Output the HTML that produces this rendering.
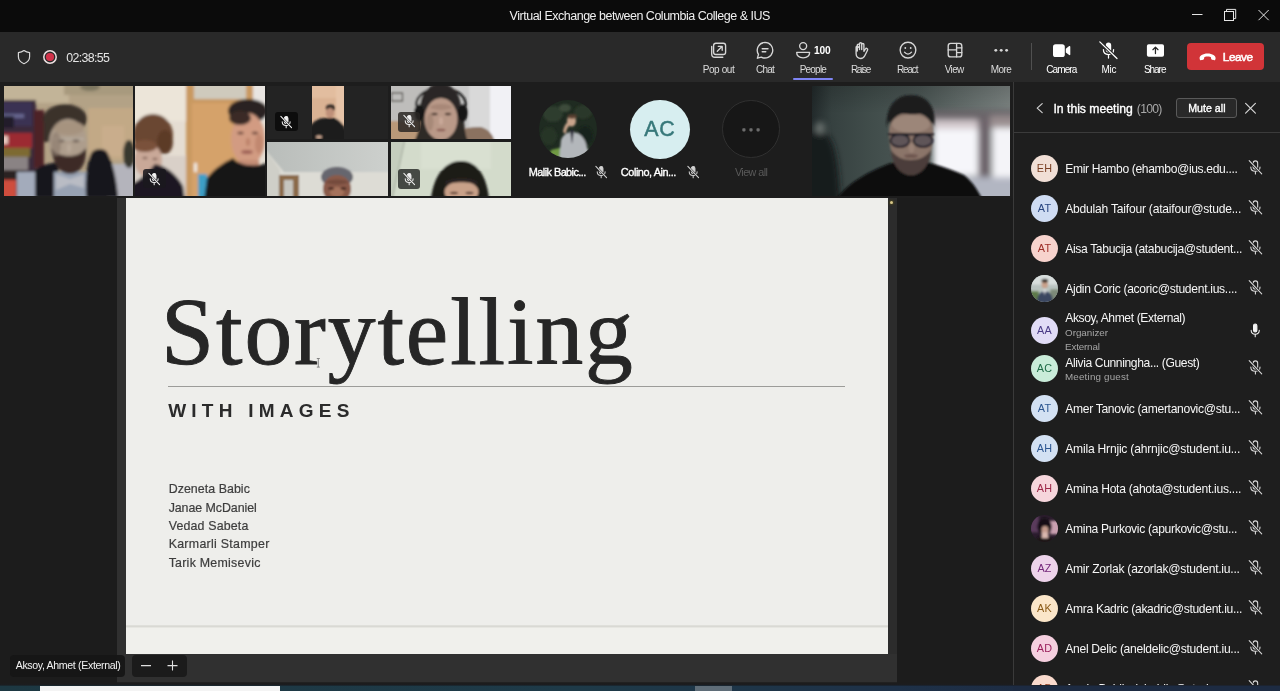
<!DOCTYPE html>
<html lang="en"><head><meta charset="utf-8"><title>Virtual Exchange between Columbia College &amp; IUS</title>
<style>
html,body{margin:0;padding:0;}
body{width:1280px;height:691px;overflow:hidden;background:#1c1c1c;font-family:'Liberation Sans',sans-serif;position:relative;}
.abs,.t,svg.i{position:absolute;}
.t{white-space:pre;line-height:1;margin:0;padding:0;}
#app{position:absolute;left:0;top:0;width:1280px;height:691px;overflow:hidden;will-change:transform;}
#titlebar{left:0;top:0;width:1280px;height:32px;background:#0b0b0b;}
#toolbar{left:0;top:32px;width:1280px;height:50px;background:#292929;}
#gallery{left:0;top:82px;width:1013px;height:116px;background:#1d1d1d;}
#stage{left:0;top:198px;width:1013px;height:487px;background:#1c1c1c;}
#content{left:117px;top:198px;width:780px;height:485px;background:#303030;}
#slide{left:126px;top:198px;width:762px;height:456px;background:#eeeeeb;overflow:hidden;}
#panel{left:1013px;top:82px;width:267px;height:603px;background:#1e1e1e;border-left:1px solid #3a3a3a;box-sizing:border-box;overflow:hidden;}
#strip{left:0;top:685px;width:1280px;height:6px;background:linear-gradient(90deg,#1d3842 0%,#1e3a48 45%,#1e3148 70%,#1d2b42 82%,#1d2b42 100%);}
.av{position:absolute;width:27px;height:27px;border-radius:50%;overflow:hidden;}
.tile{position:absolute;overflow:hidden;}
.mutebox{position:absolute;border-radius:3px;}
.ini{width:27px;height:27px;line-height:27.500px;text-align:center;font-size:10.800px;letter-spacing:.2px;}
.sb0{-webkit-text-stroke:.2px currentColor;}
.sb{-webkit-text-stroke:.35px currentColor;}
.sb2{-webkit-text-stroke:.5px currentColor;}
.ttl{-webkit-text-stroke:.9px #262626;}
</style></head><body>
<div id="app">

<header id="titlebar" class="abs">
<h1 class="t " style="left:509.62px;top:9.72px;font-size:12.5px;letter-spacing:-0.489px;color:#f0f0f0;font-weight:400;">Virtual Exchange between Columbia College &amp; IUS</h1>
<svg class="i" style="left:1186px;top:4px" width="90" height="24" viewBox="0 0 90 24" fill="none" stroke="#e6e6e6" stroke-width="1">
<path d="M6 10.5h10.5"/>
<rect x="38.500" y="7.500" width="9" height="9"/><path d="M40.500 7.500V5.400h9.200v9.200h-2.200"/>
<path d="M72.5 6l10.2 10.2M82.700 6L72.500 16.200"/>
</svg>
</header>
<nav><div id="toolbar" class="abs"></div>
<svg class="i" style="left:16px;top:48px" width="16" height="18" viewBox="0 0 16 18" fill="none" stroke="#d8d8d8" stroke-width="1.2" stroke-linejoin="round"><path d="M8 2.6c1.700 1.300 3.600 1.900 5.600 2v4.200c0 3.200-2.300 5.600-5.600 6.900c-3.300-1.300-5.600-3.700-5.600-6.900V4.600c2-.1 3.900-.7 5.600-2z"/></svg>
<svg class="i" style="left:42px;top:48.500px" width="16" height="16" viewBox="0 0 16 16"><circle cx="8" cy="8" r="6.200" fill="none" stroke="#ecdfe0" stroke-width="1.500"/><circle cx="8" cy="8" r="4.100" fill="#d3324a"/></svg>
<span class="t " style="left:66.13px;top:51.70px;font-size:12.4px;letter-spacing:-0.641px;color:#e4e4e4;font-weight:400;">02:38:55</span>
<span class="t " style="left:702.70px;top:64.63px;font-size:10.0px;letter-spacing:-0.397px;color:#dcdcdc;font-weight:400;">Pop out</span>
<span class="t " style="left:756.00px;top:64.63px;font-size:10.0px;letter-spacing:-0.742px;color:#dcdcdc;font-weight:400;">Chat</span>
<span class="t " style="left:799.70px;top:64.63px;font-size:10.0px;letter-spacing:-0.788px;color:#dcdcdc;font-weight:400;">People</span>
<span class="t " style="left:850.90px;top:64.63px;font-size:10.0px;letter-spacing:-1.295px;color:#dcdcdc;font-weight:400;">Raise</span>
<span class="t " style="left:896.90px;top:64.63px;font-size:10.0px;letter-spacing:-1.131px;color:#dcdcdc;font-weight:400;">React</span>
<span class="t " style="left:944.70px;top:64.63px;font-size:10.0px;letter-spacing:-0.633px;color:#dcdcdc;font-weight:400;">View</span>
<span class="t " style="left:990.70px;top:64.63px;font-size:10.0px;letter-spacing:-0.566px;color:#dcdcdc;font-weight:400;">More</span>
<span class="t " style="left:1046.30px;top:64.63px;font-size:10.0px;letter-spacing:-0.916px;color:#ffffff;font-weight:400;">Camera</span>
<span class="t " style="left:1101.50px;top:64.63px;font-size:10.0px;letter-spacing:-0.281px;color:#ffffff;font-weight:400;">Mic</span>
<span class="t " style="left:1143.90px;top:64.63px;font-size:10.0px;letter-spacing:-1.022px;color:#ffffff;font-weight:400;">Share</span>
<span class="t " style="left:813.99px;top:45.77px;font-size:10.2px;letter-spacing:-0.144px;color:#ffffff;font-weight:700;">100</span>
<div class="abs" style="left:793px;top:78px;width:40px;height:2px;background:#7f85f5;border-radius:1px"></div>
<div class="abs" style="left:1031px;top:43px;width:1px;height:27px;background:#505050"></div>
<svg class="i" style="left:709px;top:40px" width="20" height="20" viewBox="0 0 20 20" fill="none" stroke="#d6d6d6" stroke-width="1.35" stroke-linecap="round" stroke-linejoin="round">
<rect x="4.600" y="3.200" width="12" height="11.300" rx="2.300"/><path d="M2.700 6.500v7.400a3.300 3.300 0 0 0 3.300 3.300h7.800"/><path d="M8.300 11.300l4.700-4.700M9.300 6.400h3.900v3.900"/></svg>
<svg class="i" style="left:755px;top:40px" width="20" height="20" viewBox="0 0 20 20" fill="none" stroke="#d6d6d6" stroke-width="1.35" stroke-linecap="round" stroke-linejoin="round">
<path d="M10 2.400a7.800 7.800 0 1 1-3.700 14.700l-3.900 1.100l1.100-3.800A7.800 7.800 0 0 1 10 2.400z"/><path d="M7.200 8.700h5.800M7.200 11.700h3.600"/></svg>
<svg class="i" style="left:793px;top:40px" width="20" height="20" viewBox="0 0 20 20" fill="none" stroke="#d6d6d6" stroke-width="1.35" stroke-linecap="round" stroke-linejoin="round">
<circle cx="10.150" cy="6.100" r="3.500"/><path d="M3.700 12.300h12.900c.2 3.300-2.200 5.600-6.450 5.600s-6.650-2.300-6.450-5.600z"/></svg>
<svg class="i" style="left:851px;top:40px" width="20" height="20" viewBox="0 0 20 20" fill="none" stroke="#d6d6d6" stroke-width="1.35" stroke-linecap="round" stroke-linejoin="round">
<path d="M6.300 11V5.200a1.100 1.100 0 0 1 2.200 0V9.500V3.800a1.100 1.100 0 0 1 2.200 0V9.500V4.600a1.100 1.100 0 0 1 2.200 0V11.300l1.500-2.300a1.200 1.200 0 0 1 2.100 1.200l-2.600 5.300c-.9 1.800-2.100 3-4.200 3c-2.500 0-4.600-1.600-4.600-4.800V7.300a1.100 1.100 0 0 1 2.200 0"/></svg>
<svg class="i" style="left:897.700px;top:40.300px" width="20" height="20" viewBox="0 0 20 20" fill="none" stroke="#d6d6d6" stroke-width="1.35" stroke-linecap="round" stroke-linejoin="round">
<circle cx="10" cy="10.100" r="7.850"/><path d="M6.500 12.200c1 1.300 2.200 1.900 3.500 1.900s2.500-.6 3.500-1.900"/><circle cx="7.300" cy="8" r=".9" fill="#d6d6d6" stroke="none"/><circle cx="12.700" cy="8" r=".9" fill="#d6d6d6" stroke="none"/></svg>
<svg class="i" style="left:944.500px;top:40.200px" width="20" height="20" viewBox="0 0 20 20" fill="none" stroke="#d6d6d6" stroke-width="1.35" stroke-linecap="round" stroke-linejoin="round">
<rect x="3.200" y="3.400" width="13.600" height="13.500" rx="2.500"/><path d="M11.600 3.400v13.500M3.200 9.900h8.400M11.600 7.800h5.200M11.600 12.600h5.200"/></svg>
<svg class="i" style="left:991px;top:40px" width="20" height="20" viewBox="0 0 20 20" fill="#d6d6d6"><circle cx="4.800" cy="10.350" r="1.450"/><circle cx="10.200" cy="10.350" r="1.450"/><circle cx="15.600" cy="10.350" r="1.450"/></svg>
<svg class="i" style="left:1051px;top:40px" width="22" height="20" viewBox="0 0 22 20" fill="#ffffff"><rect x="2" y="4.200" width="11.800" height="12.800" rx="2.600"/><path d="M14.800 8.700l3.400-2.600c.5-.4 1.100 0 1.100.6v7.800c0 .6-.6 1-1.100.6l-3.400-2.600z"/></svg>
<svg class="i" style="left:1098px;top:40px" width="22" height="20" viewBox="0 0 22 20" fill="none" stroke="#ffffff" stroke-width="1.250" stroke-linecap="round"><rect x="7.800" y="2.600" width="5.400" height="9.800" rx="2.700" fill="#fff" stroke="none"/><path d="M5.400 9.600c0 3.100 2.200 5 5.100 5s5.100-1.900 5.100-5M10.500 14.800v3.300"/><path d="M1.800 1.900l17.200 16.600" stroke="#292929" stroke-width="3.200"/><path d="M1.800 1.900l17.200 16.600"/></svg>
<svg class="i" style="left:1145px;top:40px" width="22" height="20" viewBox="0 0 22 20"><rect x="1.900" y="4.200" width="17.100" height="12.500" rx="1.800" fill="#fff"/><path d="M10.450 13.600V7.400M7.900 9.700l2.550-2.600l2.550 2.600" fill="none" stroke="#292929" stroke-width="1.250" stroke-linecap="round" stroke-linejoin="round"/></svg>
<button class="abs" style="left:1187px;top:43px;width:77px;height:27px;background:#d13438;border:0;border-radius:4px;padding:0;margin:0"></button>
<svg class="i" style="left:1198px;top:50px" width="20" height="14" viewBox="0 0 20 14" fill="#fff"><path d="M1.600 8.300C1.300 6.200 4.800 3.600 9.600 3.600s8.300 2.600 8 4.700c-.1.900-.3 1.700-.9 1.900c-.7.200-2.400-.3-3-.6c-.7-.4-.6-1.400-.8-2.300c-.1-.5-1.500-.9-3.300-.9s-3.200.4-3.300.9c-.2.900-.1 1.900-.8 2.300c-.6.300-2.300.8-3 .6c-.6-.2-.8-1-.9-1.900z"/></svg>
<span class="t sb2" style="left:1222.85px;top:51.71px;font-size:11.8px;letter-spacing:-0.512px;color:#ffffff;font-weight:400;">Leave</span>
</nav>
<section><div id="gallery" class="abs"></div>
<div class="tile" style="left:4px;top:86px;width:129px;height:110px"><svg width="129" height="110" viewBox="0 0 129 110"><defs><filter id="b1" x="-10%" y="-10%" width="120%" height="120%"><feGaussianBlur stdDeviation="1.700"/></filter><filter id="b1s" x="-10%" y="-10%" width="120%" height="120%"><feGaussianBlur stdDeviation="0.800"/></filter></defs>
<rect width="129" height="110" fill="#b3a286"/>
<g filter="url(#b1)">
<rect x="-5" y="-5" width="70" height="22" fill="#c2b498"/>
<rect x="60" y="-5" width="75" height="14" fill="#a89a7e"/>
<ellipse cx="86" cy="1" rx="10" ry="4" fill="#7e7760"/>
<rect x="84" y="22" width="50" height="52" fill="#c2a986"/>
<rect x="98" y="40" width="22" height="30" fill="#c9ad8c"/>
<rect x="-4" y="14" width="36" height="100" fill="#3b2c3a"/>
<rect x="-4" y="16" width="32" height="24" fill="#3b3152"/>
<rect x="-2" y="28" width="22" height="4" fill="#66668f"/>
<rect x="-4" y="30" width="14" height="12" fill="#241c2c"/>
<rect x="-4" y="47" width="32" height="15" fill="#9c2a31"/>
<rect x="-2" y="50" width="6" height="8" fill="#e8c8c0"/>
<rect x="-4" y="62" width="30" height="9" fill="#7d6a30"/>
<rect x="-4" y="71" width="28" height="13" fill="#8a8384"/>
<rect x="-4" y="84" width="24" height="10" fill="#2a2024"/>
<rect x="-4" y="94" width="16" height="20" fill="#cf4e3c"/>
<rect x="30" y="24" width="10" height="58" fill="#4e2028"/>
<rect x="13" y="86" width="20" height="28" fill="#a3abbb"/>
<rect x="104" y="78" width="30" height="36" fill="#b4b4bc"/>
<ellipse cx="125" cy="68" rx="6" ry="14" fill="#38382e"/>
<path d="M31 112V84c6-5 14-7 24-8l-3 36z" fill="#17161d"/>
<path d="M50 86h34v28H50z" fill="#98a2b3"/>
<path d="M52 88l14 5l14-5v14l-14-4l-14 6z" fill="#b9bcc4"/>
<path d="M82 112c-1-20 1-38 6-46c4-4 12-4 15 0c6 10 10 30 11 46z" fill="#15131a"/>
<ellipse cx="61" cy="33" rx="22" ry="15" fill="#3a3029"/>
<rect x="40" y="34" width="8" height="22" fill="#3a3029"/>
<ellipse cx="64" cy="57" rx="19" ry="24" fill="#ad9d8c"/>
<ellipse cx="65" cy="42" rx="15" ry="7" fill="#a6937f"/>
<path d="M47 62c2 14 8 26 19 26s17-12 16-26c-5 6-9 8-17 8s-13-2-18-8z" fill="#3c2c26"/>
<rect x="48" y="52" width="32" height="2" fill="#cfd3d0" opacity=".3"/>
<ellipse cx="57" cy="55" rx="3.500" ry="1.400" fill="#6f6055"/><ellipse cx="72" cy="55" rx="3.500" ry="1.400" fill="#6f6055"/><ellipse cx="65" cy="62" rx="2.200" ry="4.500" fill="#b9a998"/>
<ellipse cx="52" cy="58" rx="5" ry="12" fill="#8d7c6d" opacity=".7"/>
</g></svg></div>
<div class="tile" style="left:135px;top:86px;width:130px;height:110px"><svg width="130" height="110" viewBox="0 0 130 110"><defs><filter id="b2" x="-10%" y="-10%" width="120%" height="120%"><feGaussianBlur stdDeviation="1.500"/></filter></defs>
<rect width="130" height="110" fill="#e5ddd2"/>
<g filter="url(#b2)">
<rect x="-5" y="-5" width="58" height="40" fill="#ece5d9"/>
<rect x="-5" y="70" width="58" height="45" fill="#d9d0c8"/>
<rect x="51" y="-5" width="67" height="120" fill="#c99961"/>
<rect x="57" y="17" width="55" height="98" fill="#d5a26a"/>
<rect x="59" y="-5" width="52" height="18" fill="#cfcabd"/>
<rect x="118" y="-5" width="16" height="40" fill="#e9e5e1"/>
<rect x="59" y="77" width="3" height="9" fill="#f1ece4"/>
<rect x="63" y="88" width="9" height="26" fill="#3d9fc6"/>
<ellipse cx="18" cy="49" rx="20" ry="21" fill="#6b4631"/>
<ellipse cx="30" cy="56" rx="8" ry="12" fill="#5c3a28"/>
<ellipse cx="13" cy="74" rx="14" ry="17" fill="#c9a898"/>
<ellipse cx="10" cy="60" rx="12" ry="6" fill="#7a513a"/>
<path d="M-4 98c6-2 14-8 24-20c10 2 20 8 28 22l2 14H-4z" fill="#1a1722"/>
<ellipse cx="113" cy="25" rx="20" ry="12" fill="#2b2320"/>
<ellipse cx="113" cy="53" rx="17" ry="26" fill="#d29b82"/>
<ellipse cx="105" cy="32" rx="11" ry="7" fill="#3a2b25"/>
<rect x="104" y="74" width="20" height="12" fill="#c58e76"/>
<path d="M69 114l3-22c8-10 16-15 26-20c6 8 24 10 36 4v38z" fill="#131317"/>
<ellipse cx="112" cy="66" rx="6" ry="2" fill="#9c5e55"/>
<ellipse cx="105.500" cy="47" rx="3.200" ry="1.300" fill="#5d3b31"/><ellipse cx="120" cy="47" rx="3.200" ry="1.300" fill="#5d3b31"/><ellipse cx="113" cy="56" rx="2.200" ry="4" fill="#bd836b"/><ellipse cx="124" cy="58" rx="4" ry="10" fill="#b98068" opacity=".7"/>
<ellipse cx="10" cy="72" rx="2.600" ry="1.100" fill="#6a4a40"/><ellipse cx="20" cy="73" rx="2.600" ry="1.100" fill="#6a4a40"/>
</g></svg>
<div class="mutebox" style="left:8.200px;top:82.500px;width:22.500px;height:19.500px;background:rgba(26,24,30,.86)"></div><svg class="i" style="left:11.95px;top:85.85px" width="14.500" height="14.500" viewBox="0 0 18 18" fill="none" stroke="#f2f2f2" stroke-width="1.300" stroke-linecap="round"><rect x="6.700" y="2" width="4.400" height="8.600" rx="2.200" fill="#f2f2f2"/><path d="M4 8.400c0 2.900 2.100 4.600 4.900 4.600s4.900-1.700 4.900-4.600M8.900 13.200v2.700"/><path d="M2.300 1.700l13.300 14" stroke="#1e1c22" stroke-width="2.600"/><path d="M2.300 1.700l13.300 14"/></svg></div>
<div class="tile" style="left:267px;top:86px;width:121px;height:53px;background:#232323"><svg class="i" style="left:45px;top:0" width="32" height="53" viewBox="0 0 32 53"><defs><filter id="b3" x="-10%" y="-10%" width="120%" height="120%"><feGaussianBlur stdDeviation="0.900"/></filter></defs>
<rect width="32" height="53" fill="#dab293"/>
<g filter="url(#b3)">
<rect x="-2" y="-2" width="36" height="14" fill="#e2bd9f"/>
<rect x="24" y="-2" width="10" height="40" fill="#e6c4a8"/>
<ellipse cx="18.500" cy="22" rx="4.600" ry="3.500" fill="#2e2622"/>
<ellipse cx="18" cy="27" rx="4.200" ry="5" fill="#bf9079"/>
<path d="M-2 55V40c4-5 9-8 14-8h10c5 1 9 6 12 12v11z" fill="#1b1b1f"/>
<ellipse cx="7" cy="51" rx="3" ry="1.800" fill="#c9a58f"/>
</g></svg>
<div class="mutebox" style="left:8.400px;top:26.100px;width:22.200px;height:19.100px;background:#0d0d0d"></div><svg class="i" style="left:11.75px;top:28.85px" width="14.500" height="14.500" viewBox="0 0 18 18" fill="none" stroke="#f4f4f4" stroke-width="1.300" stroke-linecap="round"><rect x="6.700" y="2" width="4.400" height="8.600" rx="2.200" fill="#f4f4f4"/><path d="M4 8.400c0 2.900 2.100 4.600 4.900 4.600s4.900-1.700 4.900-4.600M8.900 13.200v2.700"/><path d="M2.300 1.700l13.300 14" stroke="#0d0d0d" stroke-width="2.600"/><path d="M2.300 1.700l13.300 14"/></svg></div>
<div class="tile" style="left:267px;top:142px;width:121px;height:54px"><svg width="121" height="54" viewBox="0 0 121 54"><defs><filter id="b4" x="-10%" y="-10%" width="120%" height="120%"><feGaussianBlur stdDeviation="1.300"/></filter><linearGradient id="g4" x1="0" y1="0" x2="1" y2="0"><stop offset="0" stop-color="#b9bdba"/><stop offset="1" stop-color="#cdd0cd"/></linearGradient></defs>
<rect width="121" height="54" fill="url(#g4)"/>
<g filter="url(#b4)">
<path d="M-3 6l20 24h108v28H-3z" fill="#dddcd5"/>
<path d="M-3 6l16 22v30H-3z" fill="#cfcfc8"/>
<rect x="12" y="33" width="20" height="24" fill="#8b6a48"/>
<rect x="17" y="38" width="9" height="20" fill="#c7c6bf"/>
<ellipse cx="70" cy="35" rx="16" ry="10" fill="#66666e"/>
<ellipse cx="70" cy="47" rx="14" ry="14" fill="#8a5a49"/>
<ellipse cx="70" cy="50" rx="7" ry="5" fill="#a5725c"/>
<ellipse cx="70" cy="40" rx="11" ry="2.500" fill="#754b3d"/>
<ellipse cx="64" cy="46.500" rx="3" ry="1.200" fill="#3f241c"/><ellipse cx="76.500" cy="46.500" rx="3" ry="1.200" fill="#3f241c"/>
</g></svg></div>
<div class="tile" style="left:391px;top:86px;width:120px;height:53px"><svg width="120" height="53" viewBox="0 0 120 53"><defs><filter id="b5" x="-10%" y="-10%" width="120%" height="120%"><feGaussianBlur stdDeviation="1.200"/></filter></defs>
<rect width="120" height="53" fill="#c9c9c8"/>
<g filter="url(#b5)">
<rect x="-3" y="-3" width="40" height="40" fill="#bebdbb"/>
<rect x="78" y="-3" width="22" height="60" fill="#d9d9d9"/>
<rect x="99" y="-3" width="25" height="60" fill="#f1f1f5"/>
<rect x="0.500" y="7" width="11" height="8" fill="none" stroke="#4a4642" stroke-width="1.200"/>
<rect x="-3" y="35" width="38" height="22" fill="#b99878"/>
<path d="M60 56c2-10 14-16 30-15c8 2 12 8 14 15z" fill="#8b7261"/>
<path d="M25 20C25-4 75-4 75 20" fill="none" stroke="#151515" stroke-width="2.200"/>
<ellipse cx="49.500" cy="22" rx="20.500" ry="25" fill="#2b2725"/>
<path d="M29 30c0 10-2 18-6 26h54c-3-8-4-16-4-26z" fill="#2f2a27"/>
<ellipse cx="28" cy="27" rx="5" ry="8.500" fill="#141414"/>
<ellipse cx="72" cy="27" rx="5" ry="8.500" fill="#141414"/>
<ellipse cx="50" cy="33" rx="16.500" ry="21" fill="#b99988"/>
<ellipse cx="50" cy="21" rx="11" ry="3" fill="#a88878"/>
<ellipse cx="43.500" cy="28" rx="3.200" ry="1.300" fill="#4e3a33"/><ellipse cx="57" cy="28" rx="3.200" ry="1.300" fill="#4e3a33"/><ellipse cx="50" cy="35" rx="2" ry="4" fill="#c9a999"/><ellipse cx="50" cy="44" rx="4.500" ry="1.300" fill="#8c5d55"/><ellipse cx="39" cy="36" rx="3.500" ry="9" fill="#a08272" opacity=".7"/>
</g></svg>
<div class="mutebox" style="left:6.650px;top:26.100px;width:22.200px;height:19.600px;background:rgba(40,37,35,.84)"></div><svg class="i" style="left:10.5px;top:27.55px" width="14.500" height="14.500" viewBox="0 0 18 18" fill="none" stroke="#f0f0f0" stroke-width="1.300" stroke-linecap="round"><rect x="6.700" y="2" width="4.400" height="8.600" rx="2.200" fill="#f0f0f0"/><path d="M4 8.400c0 2.900 2.100 4.600 4.900 4.600s4.900-1.700 4.900-4.600M8.900 13.200v2.700"/><path d="M2.300 1.700l13.300 14" stroke="#3d3a37" stroke-width="2.600"/><path d="M2.300 1.700l13.300 14"/></svg></div>
<div class="tile" style="left:391px;top:142px;width:120px;height:54px"><svg width="120" height="54" viewBox="0 0 120 54"><defs><filter id="b6" x="-10%" y="-10%" width="120%" height="120%"><feGaussianBlur stdDeviation="1.200"/></filter></defs>
<rect width="120" height="54" fill="#d3dbcb"/>
<g filter="url(#b6)">
<rect x="30" y="-3" width="70" height="30" fill="#d9e0d1"/>
<path d="M-3 -3h17L2 57h-5z" fill="#c5cdbd"/>
<path d="M14 -3L1 57" stroke="#aab2a4" stroke-width="1.200" fill="none"/>
<path d="M40 57c2-20 12-38 30-38s26 18 28 38z" fill="#1b1b19"/>
<ellipse cx="70.500" cy="50" rx="17" ry="11" fill="#c9a189"/>
<path d="M53 44c8-5 27-5 35 0l-2-5c-8-4-23-4-31 0z" fill="#2a2420"/>
<ellipse cx="63" cy="51" rx="4" ry="1.200" fill="#5a3c30"/><ellipse cx="78.500" cy="51" rx="4" ry="1.200" fill="#5a3c30"/>
</g></svg>
<div class="mutebox" style="left:6.650px;top:27px;width:22.850px;height:19.500px;background:rgba(34,36,34,.8)"></div><svg class="i" style="left:11.15px;top:29.75px" width="14.500" height="14.500" viewBox="0 0 18 18" fill="none" stroke="#f0f0f0" stroke-width="1.300" stroke-linecap="round"><rect x="6.700" y="2" width="4.400" height="8.600" rx="2.200" fill="#f0f0f0"/><path d="M4 8.400c0 2.900 2.100 4.600 4.900 4.600s4.900-1.700 4.900-4.600M8.900 13.200v2.700"/><path d="M2.300 1.700l13.300 14" stroke="#454843" stroke-width="2.600"/><path d="M2.300 1.700l13.300 14"/></svg></div>
<div class="tile" style="left:538.500px;top:100px;width:58px;height:58px;border-radius:50%"><svg width="58" height="58" viewBox="0 0 58 58"><defs><filter id="b7" x="-10%" y="-10%" width="120%" height="120%"><feGaussianBlur stdDeviation="1.100"/></filter></defs>
<rect width="58" height="58" fill="#1f2b21"/>
<g filter="url(#b7)">
<ellipse cx="14" cy="14" rx="10" ry="8" fill="#2f3d2d"/><ellipse cx="44" cy="12" rx="9" ry="7" fill="#2b3929"/><ellipse cx="46" cy="36" rx="8" ry="10" fill="#18231a"/><ellipse cx="10" cy="36" rx="8" ry="9" fill="#283627"/><ellipse cx="26" cy="8" rx="6" ry="4" fill="#3d4c3a"/>
<path d="M8 60l4-10l16-4v14z" fill="#6f9a43"/>
<path d="M20 60l2-20c2-5 6-8 11-8s10 3 13 9l4 12l-6 4l-2 3z" fill="#b3b7bb"/>
<ellipse cx="32.500" cy="21" rx="4.500" ry="5.500" fill="#c9a48c"/>
<ellipse cx="33" cy="16.500" rx="4.500" ry="2.200" fill="#5a4030"/>
<path d="M31 30l2 14l2-14z" fill="#2a2a38"/>
<path d="M24 32c1-6 3-9 5-10l1 4c-2 2-3 5-3 8z" fill="#c9a48c"/>
</g></svg></div>
<div class="abs" style="left:630px;top:99.500px;width:59.500px;height:59px;border-radius:50%;background:#d7eef0"></div>
<span class="t sb2" style="left:644.36px;top:118.68px;font-size:21.4px;letter-spacing:0.565px;color:#37787a;font-weight:400;">AC</span>
<div class="abs" style="left:722px;top:100px;width:57.500px;height:57.500px;border-radius:50%;background:#171717;border:1px solid #303030;box-sizing:border-box"></div>
<svg class="i" style="left:740px;top:126px" width="22" height="8" viewBox="0 0 22 8" fill="#6c6c6c"><rect x="2.300" y="2.200" width="3.200" height="3.200" rx=".8"/><rect x="9.400" y="2.200" width="3.200" height="3.200" rx=".8"/><rect x="16.500" y="2.200" width="3.200" height="3.200" rx=".8"/></svg>
<span class="t sb" style="left:528.87px;top:166.67px;font-size:10.9px;letter-spacing:-0.562px;color:#ffffff;font-weight:400;">Malik Babic...</span>
<span class="t sb" style="left:620.87px;top:166.67px;font-size:10.9px;letter-spacing:-0.439px;color:#ffffff;font-weight:400;">Colino, Ain...</span>
<span class="t " style="left:734.88px;top:166.76px;font-size:10.8px;letter-spacing:-0.567px;color:#5a5a5a;font-weight:400;">View all</span>
<svg class="i" style="left:593.5px;top:165px" width="14.500" height="14.500" viewBox="0 0 18 18" fill="none" stroke="#d2d2d2" stroke-width="1.300" stroke-linecap="round"><rect x="6.700" y="2" width="4.400" height="8.600" rx="2.200" fill="#d2d2d2"/><path d="M4 8.400c0 2.900 2.100 4.600 4.900 4.600s4.900-1.700 4.900-4.600M8.900 13.200v2.700"/><path d="M2.300 1.700l13.300 14" stroke="#1e1e1e" stroke-width="2.600"/><path d="M2.300 1.700l13.300 14"/></svg>
<svg class="i" style="left:685.5px;top:165px" width="14.500" height="14.500" viewBox="0 0 18 18" fill="none" stroke="#d2d2d2" stroke-width="1.300" stroke-linecap="round"><rect x="6.700" y="2" width="4.400" height="8.600" rx="2.200" fill="#d2d2d2"/><path d="M4 8.400c0 2.900 2.100 4.600 4.900 4.600s4.900-1.700 4.900-4.600M8.900 13.200v2.700"/><path d="M2.300 1.700l13.300 14" stroke="#1e1e1e" stroke-width="2.600"/><path d="M2.300 1.700l13.300 14"/></svg>
<div class="tile" style="left:812px;top:86px;width:198px;height:110px"><svg width="198" height="110" viewBox="0 0 198 110"><defs><filter id="b8" x="-15%" y="-15%" width="130%" height="130%"><feGaussianBlur stdDeviation="3.200"/></filter><filter id="b8s" x="-10%" y="-10%" width="120%" height="120%"><feGaussianBlur stdDeviation="1.300"/></filter>
<linearGradient id="g8" x1="0" y1="0" x2="1" y2="0"><stop offset="0" stop-color="#222a2b"/><stop offset=".1" stop-color="#364140"/><stop offset=".3" stop-color="#414d4b"/><stop offset=".55" stop-color="#4d5856"/><stop offset=".75" stop-color="#636d6b"/><stop offset="1" stop-color="#7c8482"/></linearGradient>
<linearGradient id="v8" x1="0" y1="0" x2="0" y2="1"><stop offset="0" stop-color="#000" stop-opacity=".16"/><stop offset=".25" stop-color="#000" stop-opacity="0"/><stop offset="1" stop-color="#000" stop-opacity="0"/></linearGradient></defs>
<rect width="198" height="110" fill="url(#g8)"/>
<g filter="url(#b8)">
<rect x="112" y="24" width="95" height="12" fill="#6b6569"/>
<rect x="121" y="36" width="46" height="54" fill="#f6f6fa"/>
<rect x="121" y="34" width="46" height="9" fill="#d2c8cc"/>
<rect x="166" y="34" width="12" height="62" fill="#6c6269"/>
<rect x="180" y="42" width="26" height="52" fill="#f4f4f8"/>
<rect x="178" y="30" width="28" height="12" fill="#9a8e90"/>
<rect x="140" y="91" width="66" height="26" fill="#b2b6c2"/>
<path d="M-8 118V50c8-8 20-8 27 4c7 14 8 40 10 64z" fill="#191c1e"/>
<ellipse cx="8" cy="42" rx="5" ry="6" fill="#6a7270"/>
</g>
<rect width="198" height="110" fill="url(#v8)"/>
<g filter="url(#b8s)">
<path d="M22 116c10-14 24-26 54-38c8-3 38-3 46 0c12 4 22 7 30 11c10 8 14 16 20 27z" fill="#0a0b0d"/>
<ellipse cx="99" cy="30" rx="22.500" ry="20" fill="#1a1c1e"/>
<path d="M77 44c0 14 2 26 8 36c4 6 9 9 14 9s10-3 14-9c6-10 8-22 8-36c0-10-10-18-22-18s-22 8-22 18z" fill="#8b7569"/>
<ellipse cx="99" cy="38" rx="19" ry="9" fill="#9c8679"/>
<path d="M75 42c-2-20 8-33 24-33s26 12 23 32c-2-8-6-12-10-14c-8 2-22 2-28-2c-5 3-8 9-9 17z" fill="#1a1c1e"/>
<path d="M79 64c1 14 8 25 20 25s19-11 20-25c-5 7-12 10-20 10s-15-3-20-10z" fill="#4c3e3a"/>
<ellipse cx="99" cy="70" rx="7" ry="2" fill="#6e5650"/>
<rect x="76" y="47" width="46" height="2.400" fill="#1f1b25"/>
<ellipse cx="88" cy="54.500" rx="9.500" ry="6.500" fill="#3d3b4d" fill-opacity=".55" stroke="#1f1b25" stroke-width="2"/>
<ellipse cx="111" cy="54.500" rx="9.500" ry="6.500" fill="#3d3b4d" fill-opacity=".55" stroke="#1f1b25" stroke-width="2"/>
<ellipse cx="99.500" cy="62" rx="3" ry="5" fill="#9a8276"/>
</g></svg></div>
</section>
<main><div id="stage" class="abs"></div><div id="content" class="abs"></div>
<article id="slide" class="abs">
<div class="abs" style="left:0;top:428px;width:762px;height:28px;background:#f0f0ec"></div>
<div class="abs" style="left:0;top:427px;width:762px;height:3px;background:linear-gradient(#e2e2dd,#d9d9d4 50%,#ecece8)"></div>
<div class="abs" style="left:42px;top:188px;width:677px;height:1px;background:#9c9c99"></div>
</article>
<h2 class="t ttl" style="left:160.94px;top:285.32px;font-size:95.5px;letter-spacing:1.906px;color:#262626;font-weight:400;font-family:'Liberation Serif',serif;">Storytelling</h2>
<h3 class="t " style="left:168.13px;top:400.92px;font-size:19px;letter-spacing:5.246px;color:#2b2b2b;font-weight:700;">WITH IMAGES</h3>
<p class="t sb0" style="left:168.63px;top:483.00px;font-size:12.4px;letter-spacing:0.054px;color:#3d3d3d;font-weight:400;">Dzeneta Babic</p>
<p class="t sb0" style="left:168.63px;top:501.50px;font-size:12.4px;letter-spacing:-0.047px;color:#3d3d3d;font-weight:400;">Janae McDaniel</p>
<p class="t sb0" style="left:168.63px;top:519.80px;font-size:12.4px;letter-spacing:0.171px;color:#3d3d3d;font-weight:400;">Vedad Sabeta</p>
<p class="t sb0" style="left:168.63px;top:538.20px;font-size:12.4px;letter-spacing:0.289px;color:#3d3d3d;font-weight:400;">Karmarli Stamper</p>
<p class="t sb0" style="left:168.63px;top:556.50px;font-size:12.4px;letter-spacing:0.259px;color:#3d3d3d;font-weight:400;">Tarik Memisevic</p>
<svg class="i" style="left:315px;top:357px" width="7" height="12" viewBox="0 0 7 12" fill="none" stroke="#7a7a7a" stroke-width=".9"><path d="M3.300 1.500v8.600M1.800 1.500h3M1.800 10.100h3"/></svg>
<div class="abs" style="left:10px;top:655px;width:115px;height:22px;background:#161616;border-radius:4px;opacity:.92"></div>
<span class="t " style="left:15.68px;top:660.33px;font-size:10.6px;letter-spacing:-0.350px;color:#f2f2f2;font-weight:400;">Aksoy, Ahmet (External)</span>
<div class="abs" style="left:132px;top:655px;width:55px;height:22px;background:#1b1b1b;border-radius:4px"></div>
<svg class="i" style="left:132px;top:655px" width="55" height="22" viewBox="0 0 55 22" fill="none" stroke="#e0e0e0" stroke-width="1.1"><path d="M9 10.600h10M35.500 10.600h10M40.500 5.600v10"/></svg>
<div class="abs" style="left:888px;top:198px;width:9px;height:456px;background:#2c2c2c"></div>
<div class="abs" style="left:890px;top:200.500px;width:3.400px;height:3.400px;border-radius:50%;background:#d9c88a;box-shadow:0 0 2px 1px rgba(90,80,20,.55)"></div>
</main>
<div class="abs" style="left:0;top:682px;width:1280px;height:3px;background:linear-gradient(rgba(28,28,28,.5),#1c1c1c 34%,#1b1d20)"></div>
<footer id="strip" class="abs"><div class="abs" style="left:0;top:0;width:1280px;height:1px;background:rgba(24,26,30,.55)"></div><div class="abs" style="left:40px;top:1px;width:240px;height:5px;background:#f4f4f4"></div><div class="abs" style="left:695px;top:1px;width:37px;height:5px;background:#5f6d78"></div></footer>
<aside><div id="panel" class="abs"></div>
<div class="abs" style="left:1014px;top:132px;width:266px;height:1px;background:#3b3b3b"></div>
<svg class="i" style="left:1034px;top:101px" width="12" height="16" viewBox="0 0 12 16" fill="none" stroke="#d0d0d0" stroke-width="1.200" stroke-linecap="round" stroke-linejoin="round"><path d="M8.200 2.600l-5 4.500l5 4.500"/></svg>
<h4 class="t sb" style="left:1053.43px;top:103.37px;font-size:12.2px;letter-spacing:0.005px;color:#ffffff;font-weight:400;">In this meeting</h4>
<span class="t " style="left:1136.83px;top:103.37px;font-size:12.2px;letter-spacing:-0.730px;color:#a8a8a8;font-weight:400;">(100)</span>
<button class="abs" style="left:1176px;top:98px;width:61px;height:20px;box-sizing:border-box;background:#292929;border:1px solid #5a5a5a;border-radius:3px;padding:0;margin:0"></button>
<span class="t sb" style="left:1188.28px;top:103.33px;font-size:10.6px;letter-spacing:0.020px;color:#ffffff;font-weight:400;">Mute all</span>
<svg class="i" style="left:1243px;top:101px" width="16" height="16" viewBox="0 0 16 16" fill="none" stroke="#d8d8d8" stroke-width="1.150" stroke-linecap="round"><path d="M2.600 2.300l9.800 9.800M12.400 2.300L2.600 12.100"/></svg>
<ul style="list-style:none;margin:0;padding:0">
<li>
<div class="av" style="left:1031px;top:155.0px;background:#f1dfd6"></div>
<span class="t ini" style="left:1031px;top:155.0px;color:#7a3f23">EH</span>
<span class="t " style="left:1065.24px;top:163.26px;font-size:12.1px;letter-spacing:-0.362px;color:#f6f6f6;font-weight:400;">Emir Hambo (ehambo@ius.edu....</span>
<svg class="i" style="left:1246.900px;top:159.2px" width="17" height="17" viewBox="0 0 18 18" fill="none" stroke="#d8d8d8" stroke-width="1.150" stroke-linecap="round"><rect x="6.500" y="2" width="4.800" height="8.600" rx="2.400"/><path d="M4 8.400c0 2.900 2.100 4.600 4.900 4.600s4.900-1.700 4.900-4.600M8.900 13.200v2.700"/><path d="M2.300 1.700l13.300 14" stroke="#1e1e1e" stroke-width="2.800"/><path d="M2.300 1.700l13.300 14"/></svg>
</li>
<li>
<div class="av" style="left:1031px;top:195.0px;background:#cfdcf3"></div>
<span class="t ini" style="left:1031px;top:195.0px;color:#27447f">AT</span>
<span class="t " style="left:1065.24px;top:203.26px;font-size:12.1px;letter-spacing:-0.223px;color:#f6f6f6;font-weight:400;">Abdulah Taifour (ataifour@stude...</span>
<svg class="i" style="left:1246.900px;top:199.2px" width="17" height="17" viewBox="0 0 18 18" fill="none" stroke="#d8d8d8" stroke-width="1.150" stroke-linecap="round"><rect x="6.500" y="2" width="4.800" height="8.600" rx="2.400"/><path d="M4 8.400c0 2.900 2.100 4.600 4.900 4.600s4.900-1.700 4.900-4.600M8.900 13.200v2.700"/><path d="M2.300 1.700l13.300 14" stroke="#1e1e1e" stroke-width="2.800"/><path d="M2.300 1.700l13.300 14"/></svg>
</li>
<li>
<div class="av" style="left:1031px;top:235.0px;background:#f7d3cd"></div>
<span class="t ini" style="left:1031px;top:235.0px;color:#9c2b25">AT</span>
<span class="t " style="left:1065.24px;top:243.26px;font-size:12.1px;letter-spacing:-0.346px;color:#f6f6f6;font-weight:400;">Aisa Tabucija (atabucija@student...</span>
<svg class="i" style="left:1246.900px;top:239.2px" width="17" height="17" viewBox="0 0 18 18" fill="none" stroke="#d8d8d8" stroke-width="1.150" stroke-linecap="round"><rect x="6.500" y="2" width="4.800" height="8.600" rx="2.400"/><path d="M4 8.400c0 2.900 2.100 4.600 4.900 4.600s4.900-1.700 4.900-4.600M8.900 13.200v2.700"/><path d="M2.300 1.700l13.300 14" stroke="#1e1e1e" stroke-width="2.800"/><path d="M2.300 1.700l13.300 14"/></svg>
</li>
<li>
<div class="av" style="left:1031px;top:275.0px"><svg width="27" height="27" viewBox="0 0 28 28"><defs><filter id="pb1"><feGaussianBlur stdDeviation="1.1"/></filter></defs><rect width="28" height="28" fill="#b9c3c0"/><g filter="url(#pb1)"><rect x="-2" y="-2" width="32" height="12" fill="#d8dedd"/><rect x="-2" y="17" width="10" height="13" fill="#5d7a4a"/><rect x="20" y="15" width="10" height="14" fill="#7d8a78"/><path d="M6 30c0-9 3-13 8.500-13s8.500 4 8.500 13z" fill="#3b4760"/><ellipse cx="14.300" cy="9.500" rx="3.400" ry="4.300" fill="#c9a08a"/><ellipse cx="14.300" cy="6" rx="3.500" ry="2" fill="#3a302a"/><path d="M13 15l1.300 6l1.300-6z" fill="#e8e8ea"/></g></svg></div>
<span class="t " style="left:1065.24px;top:283.26px;font-size:12.1px;letter-spacing:-0.300px;color:#f6f6f6;font-weight:400;">Ajdin Coric (acoric@student.ius....</span>
<svg class="i" style="left:1246.900px;top:279.2px" width="17" height="17" viewBox="0 0 18 18" fill="none" stroke="#d8d8d8" stroke-width="1.150" stroke-linecap="round"><rect x="6.500" y="2" width="4.800" height="8.600" rx="2.400"/><path d="M4 8.400c0 2.900 2.100 4.600 4.900 4.600s4.900-1.700 4.900-4.600M8.900 13.200v2.700"/><path d="M2.300 1.700l13.300 14" stroke="#1e1e1e" stroke-width="2.800"/><path d="M2.300 1.700l13.300 14"/></svg>
</li>
<li>
<div class="av" style="left:1031px;top:316.5px;background:#e1dcf6"></div>
<span class="t ini" style="left:1031px;top:316.5px;color:#493a86">AA</span>
<span class="t " style="left:1065.24px;top:312.26px;font-size:12.1px;letter-spacing:-0.382px;color:#f6f6f6;font-weight:400;">Aksoy, Ahmet (External)</span>
<span class="t " style="left:1065.01px;top:328.10px;font-size:9.8px;letter-spacing:0.009px;color:#a6a6a6;font-weight:400;">Organizer</span>
<span class="t " style="left:1065.01px;top:341.50px;font-size:9.8px;letter-spacing:-0.152px;color:#a6a6a6;font-weight:400;">External</span>
<svg class="i" style="left:1246.900px;top:321.7px" width="17" height="17" viewBox="0 0 18 18" fill="none" stroke="#f4f4f4" stroke-width="1.100" stroke-linecap="round"><rect x="6.900" y="2.050" width="3.600" height="8.600" rx="1.800" fill="#f4f4f4"/><path d="M4.400 8.800c0 2.700 1.900 4.200 4.300 4.200s4.300-1.500 4.300-4.200M8.700 13.200v2.300"/></svg>
</li>
<li>
<div class="av" style="left:1031px;top:354.5px;background:#c9ecd9"></div>
<span class="t ini" style="left:1031px;top:354.5px;color:#1f6b47">AC</span>
<span class="t " style="left:1065.24px;top:356.56px;font-size:12.1px;letter-spacing:-0.381px;color:#f6f6f6;font-weight:400;">Alivia Cunningha... (Guest)</span>
<span class="t " style="left:1065.01px;top:372.40px;font-size:9.8px;letter-spacing:0.187px;color:#a6a6a6;font-weight:400;">Meeting guest</span>
<svg class="i" style="left:1246.900px;top:358.7px" width="17" height="17" viewBox="0 0 18 18" fill="none" stroke="#d8d8d8" stroke-width="1.150" stroke-linecap="round"><rect x="6.500" y="2" width="4.800" height="8.600" rx="2.400"/><path d="M4 8.400c0 2.900 2.100 4.600 4.900 4.600s4.900-1.700 4.900-4.600M8.900 13.200v2.700"/><path d="M2.300 1.700l13.300 14" stroke="#1e1e1e" stroke-width="2.800"/><path d="M2.300 1.700l13.300 14"/></svg>
</li>
<li>
<div class="av" style="left:1031px;top:395.0px;background:#d3e1f3"></div>
<span class="t ini" style="left:1031px;top:395.0px;color:#2b5590">AT</span>
<span class="t " style="left:1065.24px;top:403.26px;font-size:12.1px;letter-spacing:-0.312px;color:#f6f6f6;font-weight:400;">Amer Tanovic (amertanovic@stu...</span>
<svg class="i" style="left:1246.900px;top:399.2px" width="17" height="17" viewBox="0 0 18 18" fill="none" stroke="#d8d8d8" stroke-width="1.150" stroke-linecap="round"><rect x="6.500" y="2" width="4.800" height="8.600" rx="2.400"/><path d="M4 8.400c0 2.900 2.100 4.600 4.900 4.600s4.900-1.700 4.900-4.600M8.900 13.200v2.700"/><path d="M2.300 1.700l13.300 14" stroke="#1e1e1e" stroke-width="2.800"/><path d="M2.300 1.700l13.300 14"/></svg>
</li>
<li>
<div class="av" style="left:1031px;top:435.0px;background:#d3e1f3"></div>
<span class="t ini" style="left:1031px;top:435.0px;color:#2b5590">AH</span>
<span class="t " style="left:1065.24px;top:443.26px;font-size:12.1px;letter-spacing:-0.212px;color:#f6f6f6;font-weight:400;">Amila Hrnjic (ahrnjic@student.iu...</span>
<svg class="i" style="left:1246.900px;top:439.2px" width="17" height="17" viewBox="0 0 18 18" fill="none" stroke="#d8d8d8" stroke-width="1.150" stroke-linecap="round"><rect x="6.500" y="2" width="4.800" height="8.600" rx="2.400"/><path d="M4 8.400c0 2.900 2.100 4.600 4.900 4.600s4.900-1.700 4.900-4.600M8.900 13.200v2.700"/><path d="M2.300 1.700l13.300 14" stroke="#1e1e1e" stroke-width="2.800"/><path d="M2.300 1.700l13.300 14"/></svg>
</li>
<li>
<div class="av" style="left:1031px;top:475.0px;background:#f6d6dc"></div>
<span class="t ini" style="left:1031px;top:475.0px;color:#9c2748">AH</span>
<span class="t " style="left:1065.24px;top:483.26px;font-size:12.1px;letter-spacing:-0.279px;color:#f6f6f6;font-weight:400;">Amina Hota (ahota@student.ius....</span>
<svg class="i" style="left:1246.900px;top:479.2px" width="17" height="17" viewBox="0 0 18 18" fill="none" stroke="#d8d8d8" stroke-width="1.150" stroke-linecap="round"><rect x="6.500" y="2" width="4.800" height="8.600" rx="2.400"/><path d="M4 8.400c0 2.900 2.100 4.600 4.900 4.600s4.900-1.700 4.900-4.600M8.900 13.200v2.700"/><path d="M2.300 1.700l13.300 14" stroke="#1e1e1e" stroke-width="2.800"/><path d="M2.300 1.700l13.300 14"/></svg>
</li>
<li>
<div class="av" style="left:1031px;top:515.0px"><svg width="27" height="27" viewBox="0 0 28 28"><defs><filter id="pb2"><feGaussianBlur stdDeviation="1.100"/></filter></defs><rect width="28" height="28" fill="#2a1c2c"/><g filter="url(#pb2)"><rect x="-2" y="-2" width="10" height="20" fill="#5a3a5c"/><rect x="20" y="6" width="10" height="14" fill="#c9a0b0"/><ellipse cx="14" cy="12" rx="7.500" ry="9" fill="#151015"/><ellipse cx="14.500" cy="15.500" rx="3.600" ry="4.200" fill="#c49a8c"/><path d="M4 30c1-7 5-9 10-9s9 2 10 9z" fill="#1b1418"/><rect x="11" y="18" width="7" height="6" rx="1" fill="#d9b7ae"/></g></svg></div>
<span class="t " style="left:1065.24px;top:523.26px;font-size:12.1px;letter-spacing:-0.307px;color:#f6f6f6;font-weight:400;">Amina Purkovic (apurkovic@stu...</span>
<svg class="i" style="left:1246.900px;top:519.2px" width="17" height="17" viewBox="0 0 18 18" fill="none" stroke="#d8d8d8" stroke-width="1.150" stroke-linecap="round"><rect x="6.500" y="2" width="4.800" height="8.600" rx="2.400"/><path d="M4 8.400c0 2.900 2.100 4.600 4.900 4.600s4.900-1.700 4.900-4.600M8.900 13.200v2.700"/><path d="M2.300 1.700l13.300 14" stroke="#1e1e1e" stroke-width="2.800"/><path d="M2.300 1.700l13.300 14"/></svg>
</li>
<li>
<div class="av" style="left:1031px;top:555.0px;background:#edd3ea"></div>
<span class="t ini" style="left:1031px;top:555.0px;color:#74277a">AZ</span>
<span class="t " style="left:1065.24px;top:563.26px;font-size:12.1px;letter-spacing:-0.254px;color:#f6f6f6;font-weight:400;">Amir Zorlak (azorlak@student.iu...</span>
<svg class="i" style="left:1246.900px;top:559.2px" width="17" height="17" viewBox="0 0 18 18" fill="none" stroke="#d8d8d8" stroke-width="1.150" stroke-linecap="round"><rect x="6.500" y="2" width="4.800" height="8.600" rx="2.400"/><path d="M4 8.400c0 2.900 2.100 4.600 4.900 4.600s4.900-1.700 4.900-4.600M8.900 13.200v2.700"/><path d="M2.300 1.700l13.300 14" stroke="#1e1e1e" stroke-width="2.800"/><path d="M2.300 1.700l13.300 14"/></svg>
</li>
<li>
<div class="av" style="left:1031px;top:595.0px;background:#fbe6c9"></div>
<span class="t ini" style="left:1031px;top:595.0px;color:#8a5a17">AK</span>
<span class="t " style="left:1065.24px;top:603.26px;font-size:12.1px;letter-spacing:-0.321px;color:#f6f6f6;font-weight:400;">Amra Kadric (akadric@student.iu...</span>
<svg class="i" style="left:1246.900px;top:599.2px" width="17" height="17" viewBox="0 0 18 18" fill="none" stroke="#d8d8d8" stroke-width="1.150" stroke-linecap="round"><rect x="6.500" y="2" width="4.800" height="8.600" rx="2.400"/><path d="M4 8.400c0 2.900 2.100 4.600 4.900 4.600s4.900-1.700 4.900-4.600M8.900 13.200v2.700"/><path d="M2.300 1.700l13.300 14" stroke="#1e1e1e" stroke-width="2.800"/><path d="M2.300 1.700l13.300 14"/></svg>
</li>
<li>
<div class="av" style="left:1031px;top:635.0px;background:#f5cfdf"></div>
<span class="t ini" style="left:1031px;top:635.0px;color:#9a1f5c">AD</span>
<span class="t " style="left:1065.24px;top:643.26px;font-size:12.1px;letter-spacing:-0.287px;color:#f6f6f6;font-weight:400;">Anel Delic (aneldelic@student.iu...</span>
<svg class="i" style="left:1246.900px;top:639.2px" width="17" height="17" viewBox="0 0 18 18" fill="none" stroke="#d8d8d8" stroke-width="1.150" stroke-linecap="round"><rect x="6.500" y="2" width="4.800" height="8.600" rx="2.400"/><path d="M4 8.400c0 2.900 2.100 4.600 4.900 4.600s4.900-1.700 4.900-4.600M8.900 13.200v2.700"/><path d="M2.300 1.700l13.300 14" stroke="#1e1e1e" stroke-width="2.800"/><path d="M2.300 1.700l13.300 14"/></svg>
</li>
<li>
<div class="av" style="left:1031px;top:675.0px;background:#f9dacd"></div>
<span class="t ini" style="left:1031px;top:675.0px;color:#8e3a1c">AB</span>
<span class="t " style="left:1065.24px;top:683.26px;font-size:12.1px;letter-spacing:-0.268px;color:#f6f6f6;font-weight:400;">Armin Bublin (abublin@stude...</span>
<svg class="i" style="left:1246.900px;top:679.2px" width="17" height="17" viewBox="0 0 18 18" fill="none" stroke="#d8d8d8" stroke-width="1.150" stroke-linecap="round"><rect x="6.500" y="2" width="4.800" height="8.600" rx="2.400"/><path d="M4 8.400c0 2.900 2.100 4.600 4.900 4.600s4.900-1.700 4.900-4.600M8.900 13.200v2.700"/><path d="M2.300 1.700l13.300 14" stroke="#1e1e1e" stroke-width="2.800"/><path d="M2.300 1.700l13.300 14"/></svg>
</li>
</ul></aside>
<div class="abs" style="left:1013px;top:685px;width:267px;height:6px;background:linear-gradient(#1c232f 0,#1c232f 1px,#1d2b42 1px)"></div>
</div></body></html>
